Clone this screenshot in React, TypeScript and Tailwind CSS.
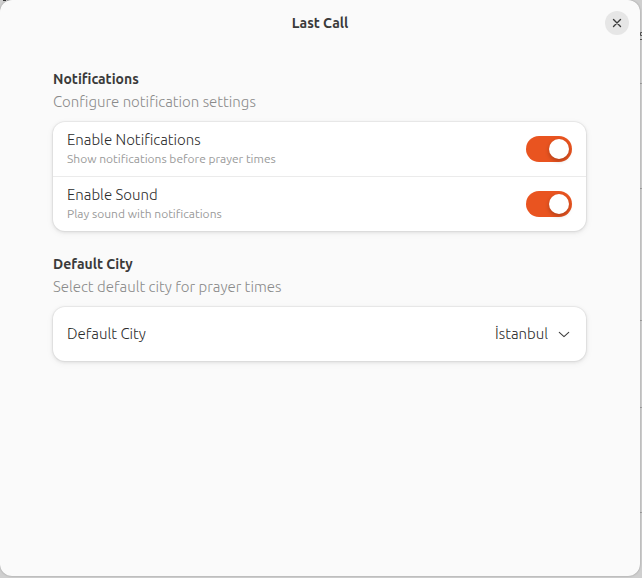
import { useState } from "react";
import type { ReactNode } from "react";

function Switch({ id, describedBy }: { id: string; describedBy: string }) {
  const [on, setOn] = useState(true);
  return (
    <input
      id={id}
      type="checkbox"
      role="switch"
      aria-describedby={describedBy}
      checked={on}
      onChange={(e) => setOn(e.target.checked)}
      className="flex h-[26px] w-[46px] shrink-0 cursor-pointer appearance-none items-center rounded-full bg-[#d5d5d5] p-[3px] before:block before:size-5 before:rounded-full before:bg-white before:shadow-[0_2px_4px_rgba(0,0,0,0.25)] before:content-[''] checked:justify-end checked:bg-[#e95420]"
    />
  );
}

function SwitchRow({ id, title, subtitle }: { id: string; title: string; subtitle: string }) {
  return (
    <div className="flex items-center justify-between gap-3 px-3.5 py-2">
      <div className="flex flex-col">
        <label htmlFor={id} className="text-[15px] leading-5 font-light text-[#2c2c2c]">
          {title}
        </label>
        <span id={id + "-hint"} className="text-xs leading-[18px] text-[#9a9a9a]">
          {subtitle}
        </span>
      </div>
      <Switch id={id} describedBy={id + "-hint"} />
    </div>
  );
}

function Group({ title, description, children }: { title: string; description: string; children: ReactNode }) {
  return (
    <section className="flex flex-col">
      <h2 className="text-sm leading-5 font-bold text-[#3a3a3a]">{title}</h2>
      <p className="mt-[3px] text-[15px] leading-5 font-light text-[#8a8a8a]">{description}</p>
      <div className="mt-2.5 divide-y divide-[#ebebeb] rounded-xl bg-white shadow-[0_0_0_1px_rgba(0,0,0,0.04),0_1px_3px_1px_rgba(0,0,0,0.07),0_2px_6px_2px_rgba(0,0,0,0.03)]">
        {children}
      </div>
    </section>
  );
}

function Backdrop() {
  return (
    <svg aria-hidden="true" className="absolute inset-y-0 right-0 h-full w-1" viewBox="0 0 4 578" preserveAspectRatio="xMaxYMin slice">
      <path d="M2 83.5h2M2 188.5h2M2 320.5h2M2 407.5h2M2 512.5h2" stroke="#a0a0a0" />
      <path d="M4 32.5H2.5v3H4M2 39.5h2" stroke="#555" fill="none" />
    </svg>
  );
}

export default function App() {
  const [city, setCity] = useState("İstanbul");
  return (
    <div className="relative flex min-h-screen bg-[#cfcfcf] pr-0.5 pb-0.5 font-['Ubuntu','Open_Sans',sans-serif]">
      <Backdrop />
      <svg aria-hidden="true" viewBox="0 0 12 2" className="absolute top-0 left-0 h-0.5 w-3">
        <path d="M3 .5h3" stroke="#333" />
        <path d="M7 .5h3" stroke="#aaa" />
      </svg>
      <div className="relative flex grow flex-col rounded-xl bg-[#fafafa] shadow-[0_0_2px_rgba(0,0,0,0.3)]">
        <header className="grid h-[46px] grid-cols-[1fr_auto_1fr] items-center px-[11px]">
          <h1 className="col-start-2 text-sm leading-5 font-bold text-[#3a3a3a]">Last Call</h1>
          <button
            type="button"
            aria-label="Close"
            className="flex size-6 items-center justify-center justify-self-end rounded-full bg-[#e6e6e6] text-[#3a3a3a]"
          >
            <svg viewBox="0 0 16 16" className="size-4" fill="none" stroke="currentColor" strokeWidth="1.4" strokeLinecap="round">
              <path d="M4.5 4.5l7 7M11.5 4.5l-7 7" />
            </svg>
          </button>
        </header>
        <main className="flex flex-col gap-[23px] pt-[23px] pr-[54px] pl-[53px]">
          <Group title="Notifications" description="Configure notification settings">
            <SwitchRow id="notify" title="Enable Notifications" subtitle="Show notifications before prayer times" />
            <SwitchRow id="sound" title="Enable Sound" subtitle="Play sound with notifications" />
          </Group>
          <Group title="Default City" description="Select default city for prayer times">
            <div className="flex min-h-[54px] items-center justify-between gap-3 px-3.5">
              <label htmlFor="city" className="text-[15px] leading-5 font-light text-[#2c2c2c]">
                Default City
              </label>
              <div className="grid items-center">
                <select
                  id="city"
                  value={city}
                  onChange={(e) => setCity(e.target.value)}
                  className="col-start-1 row-start-1 cursor-pointer appearance-none bg-transparent pr-6 text-right text-[15px] leading-5 font-light text-[#2c2c2c] [text-align-last:right]"
                >
                  <option>İstanbul</option>
                  <option>Ankara</option>
                  <option>İzmir</option>
                </select>
                <svg
                  aria-hidden="true"
                  viewBox="0 0 16 16"
                  className="pointer-events-none col-start-1 row-start-1 size-4 justify-self-end text-[#3d3d3d]"
                  fill="none"
                  stroke="currentColor"
                  strokeWidth="1.1"
                  strokeLinecap="round"
                  strokeLinejoin="round"
                >
                  <path d="M3.3 6.4L8 10.6l4.7-4.2" />
                </svg>
              </div>
            </div>
          </Group>
        </main>
      </div>
    </div>
  );
}
